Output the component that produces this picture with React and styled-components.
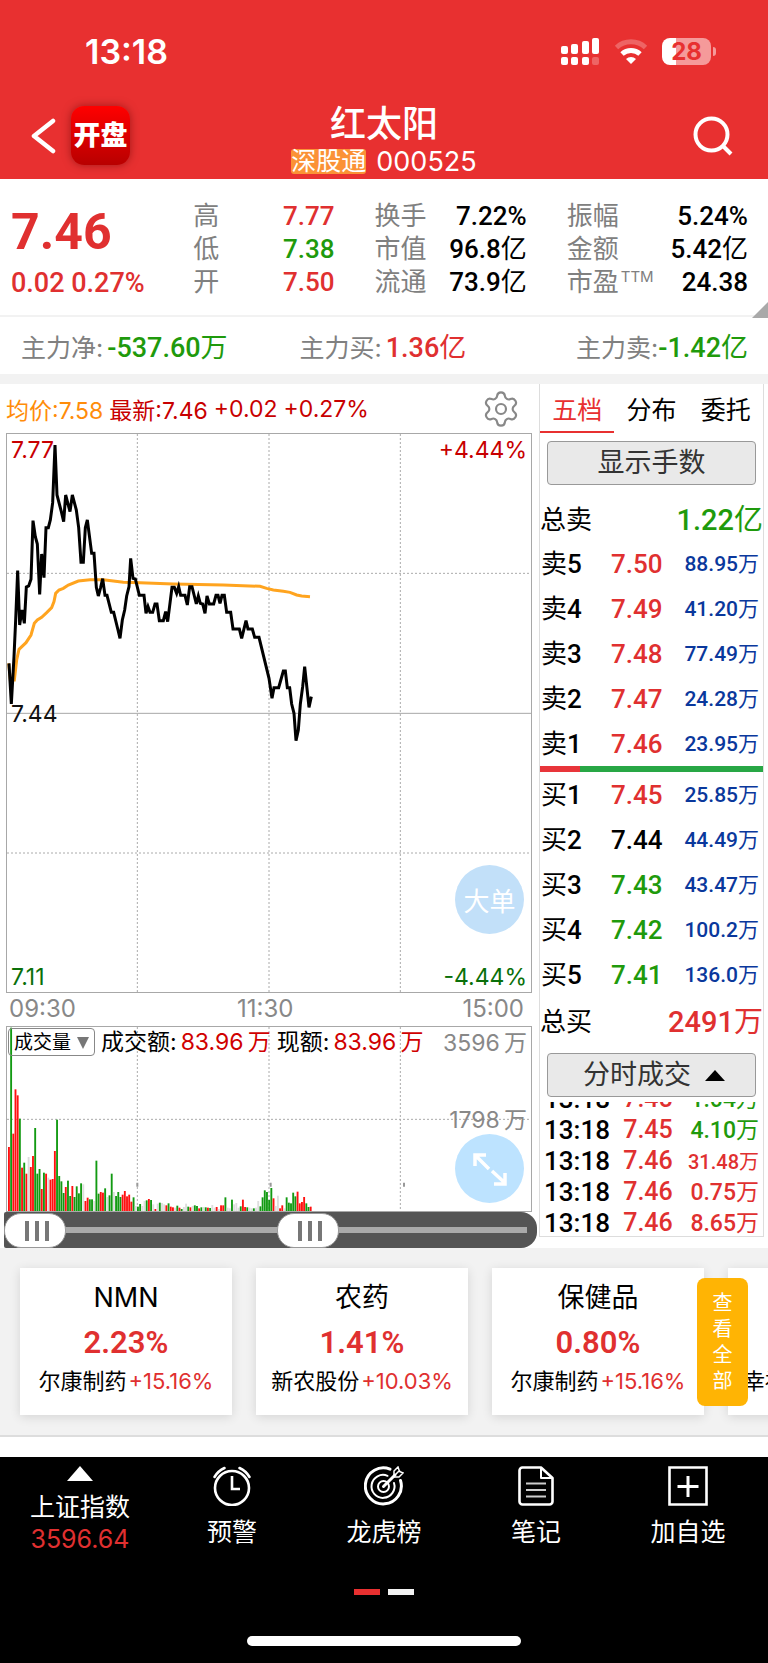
import {useState} from 'react';
import styled, {createGlobalStyle} from 'styled-components';
import {Settings} from 'lucide-react';

const RED = '#e03030';
const GREEN = '#1f9a0c';
const BLUE = '#0a389c';
const tones = {red: RED, green: GREEN, blue: BLUE, black: '#000'};

const GlobalStyle = createGlobalStyle`
    * { box-sizing:border-box; }
    body {
        margin:0;
        background-color:white;
        color:#000;
        font-family:Inter, "Noto Sans CJK SC", sans-serif;
    }
    button, select, input { font-family:inherit; color:inherit; margin:0; padding:0; }
    button { border:none; background:none; cursor:pointer; }
    a { color:inherit; text-decoration:none; }
    table { border-collapse:collapse; width:100%; }
    td, th { padding:0; font-weight:400; text-align:left; }
    dl, dd, p, h1 { margin:0; }
    svg { display:block; }
`;

const Page = styled.div`
    position:relative;
    overflow:hidden;
`;

/* numbers use a narrower, heavier face than the labels */
const Num = styled.span`
    font-family:Roboto, "Noto Sans CJK SC", sans-serif;
    font-weight:${p => p.$weight || 500};
    font-size:${p => p.$size || 26}px;
    color:${p => tones[p.$tone] || 'inherit'};
    white-space:nowrap;
`;

const Unit = styled.span`
    font-weight:400;
`;

/* ---------- header ---------- */

const Header = styled.header`
    background-color:#e83030;
    color:white;
`;
const StatusBar = styled.div`
    display:flex;
    justify-content:space-between;
    align-items:center;
    height:95px;
    padding:7px 57px 0 85px;
    font-size:34px;
    font-weight:600;
`;
const StatusIcons = styled.div`
    display:flex;
    align-items:center;
    gap:14px;
`;
const Battery = styled.div`
    position:relative;
    width:49px;
    height:27px;
    border-radius:8px;
    background:linear-gradient(90deg, white 28%, #f59a9a 28%);
    color:#e83030;
    font-size:24px;
    font-weight:700;
    line-height:27px;
    text-align:center;
    &::after {
        content:'';
        position:absolute;
        left:51px;
        top:9px;
        width:3px;
        height:9px;
        border-radius:0 3px 3px 0;
        background-color:#f59a9a;
    }
`;
const NavBar = styled.div`
    display:grid;
    grid-template-columns:1fr auto 1fr;
    align-items:center;
    height:84px;
    padding:0 30px 3px;
`;
const NavLeft = styled.div`
    display:flex;
    align-items:center;
    gap:15px;
`;
const AppLogo = styled.a`
    width:59px;
    height:59px;
    border-radius:13px;
    background:linear-gradient(#ff0000, #b80000);
    box-shadow:0 0 8px rgba(90, 0, 0, 0.5);
    font-size:27px;
    font-weight:900;
    line-height:59px;
    text-align:center;
    white-space:nowrap;
`;
const StockTitle = styled.div`
    padding-top:6px;
    text-align:center;
    h1 { font-size:36px; font-weight:500; line-height:42px; }
`;
const StockCode = styled.div`
    display:flex;
    align-items:center;
    justify-content:center;
    gap:10px;
    margin-top:4px;
    font-size:27px;
    line-height:25px;
`;
const Badge = styled.span`
    border-radius:3px;
    background-color:#fb9236;
    font-size:25px;
`;
const SearchButton = styled.button`
    justify-self:end;
    margin-right:5px;
`;

/* ---------- quote summary ---------- */

const Quote = styled.section`
    position:relative;
    display:grid;
    grid-template-columns:142fr 141fr 152fr 181fr;
    column-gap:40px;
    height:138px;
    padding:20px 20px 0 11px;
    border-bottom:2px solid #f2f2f2;
    &::after {
        content:'';
        position:absolute;
        right:0;
        bottom:-3px;
        border-left:16px solid transparent;
        border-bottom:16px solid #a9a9a9;
    }
`;
const LastPrice = styled.div`
    color:${RED};
    span { display:block; line-height:67px; }
    span + span { line-height:34px; }
`;
const StatList = styled.dl`
    color:#808080;
    font-size:26px;
    line-height:33px;
    div { display:flex; justify-content:space-between; height:33px; white-space:nowrap; }
    sup { font-size:15px; line-height:15px; vertical-align:9px; margin-left:2px; }
`;
const FlowRow = styled.section`
    display:grid;
    grid-template-columns:280fr 278fr 169fr;
    height:67px;
    padding:4px 20px 0 21px;
    border-bottom:10px solid #f2f2f2;
    color:#808080;
    font-size:25px;
    line-height:54px;
    white-space:nowrap;
    div { display:flex; gap:4px; }
    div:last-child { justify-content:flex-end; gap:0; }
`;

/* ---------- chart column ---------- */

const Board = styled.main`
    display:flex;
    padding-right:4px;
`;
const ChartColumn = styled.section`
    flex:1;
    min-width:0;
    padding:0 7px 0 6px;
`;
const ChartInfo = styled.div`
    display:flex;
    align-items:center;
    gap:6px;
    height:49px;
    padding-right:11px;
    color:#c80000;
    font-size:23px;
    white-space:nowrap;
    button { margin-left:auto; color:#888; }
`;
const Average = styled.span`
    color:#ff8c0a;
`;
const PlotBox = styled.div`
    position:relative;
    height:${p => p.$height}px;
    border:1px solid #a8a8a8;
`;
const Plot = styled.svg`
    width:100%;
    height:100%;
    * { vector-effect:non-scaling-stroke; }
`;
const PlotLabel = styled.span`
    position:absolute;
    ${p => p.$right ? 'right:4px;' : 'left:4px;'}
    top:${p => p.$top};
    color:${p => p.$color};
    font-size:23px;
    line-height:28px;
    white-space:nowrap;
`;
const TimeAxis = styled.div`
    display:flex;
    justify-content:space-between;
    height:33px;
    padding:0 8px 0 3px;
    color:#888;
    font-size:24px;
    line-height:31px;
    span:nth-child(2) { margin-right:8px; }
`;
const RoundButton = styled.button`
    position:absolute;
    right:7px;
    bottom:${p => p.$bottom}px;
    display:flex;
    align-items:center;
    justify-content:center;
    width:69px;
    height:69px;
    border-radius:50%;
    background-color:${p => p.$color};
    color:white;
    font-size:26px;
`;
const VolumeBar = styled.div`
    position:absolute;
    left:1px;
    top:1px;
    display:flex;
    align-items:center;
    gap:6px;
    height:28px;
    font-size:23px;
    line-height:24px;
    white-space:nowrap;
    b { margin-left:4px; color:#d00000; font-weight:400; }
`;
const SelectWrap = styled.label`
    position:relative;
    svg { position:absolute; right:6px; top:9px; pointer-events:none; }
`;
const IndicatorSelect = styled.select`
    display:block;
    appearance:none;
    width:87px;
    height:28px;
    padding-left:5px;
    border:1px solid #888;
    border-radius:4px;
    background-color:transparent;
    font-size:19px;
`;
const RangeSlider = styled.div`
    position:relative;
    height:36px;
    margin:0 -5px 0 -2px;
    border-radius:2px 16px 16px 2px;
    background:linear-gradient(#aaa, #aaa) 10px 15px / calc(100% - 20px) 6px no-repeat #555;
`;
const RangeInput = styled.input`
    position:absolute;
    inset:0;
    width:100%;
    height:36px;
    appearance:none;
    background:none;
    pointer-events:none;
    &::-webkit-slider-thumb {
        appearance:none;
        pointer-events:auto;
        width:62px;
        height:35px;
        border:1px solid #999;
        border-radius:17px;
        background:
            linear-gradient(#777, #777) 20px 7px / 4px 20px no-repeat,
            linear-gradient(#777, #777) 30px 7px / 4px 20px no-repeat,
            linear-gradient(#777, #777) 40px 7px / 4px 20px no-repeat,
            white;
    }
`;

/* ---------- order book ---------- */

const BookPanel = styled.aside`
    flex:0 0 225px;
    margin-bottom:11px;
    border:1px solid #ddd;
    border-top:none;
`;
const Tabs = styled.div`
    display:flex;
    height:49px;
`;
const Tab = styled.button`
    flex:1;
    border-bottom:2px solid ${p => p.$active ? '#e83030' : 'transparent'};
    color:${p => p.$active ? '#e83030' : '#000'};
    font-size:25px;
`;
const GreyButton = styled.button`
    display:flex;
    align-items:center;
    justify-content:center;
    gap:14px;
    width:calc(100% - 14px);
    height:44px;
    margin:${p => p.$margin};
    border:1px solid #999;
    border-radius:4px;
    background-color:#e9e9e9;
    color:#333;
    font-size:27px;
    line-height:36px;
    svg { margin-right:-5px; }
`;
const TotalRow = styled.div`
    display:flex;
    align-items:center;
    justify-content:space-between;
    height:56px;
    padding:${p => p.$padding};
    font-size:26px;
`;
const BookTable = styled.table`
    font-family:Roboto, "Noto Sans CJK SC", sans-serif;
    font-size:26px;
    th, td { height:45px; line-height:34px; }
    th { width:71px; padding-left:1px; white-space:nowrap; }
    td:last-child { padding-right:4px; font-size:21px; text-align:right; }
`;
const RatioBar = styled.div`
    height:6px;
    background:linear-gradient(90deg, #e8353a 18%, #28a745 18%);
`;
const TradeClip = styled.div`
    display:flex;
    flex-direction:column;
    justify-content:flex-end;
    height:134px;
    overflow:hidden;
`;
const TradeTable = styled.table`
    font-family:Roboto, "Noto Sans CJK SC", sans-serif;
    font-size:25px;
    td { height:31px; padding-top:5px; line-height:22px; }
    td:first-child { padding-left:4px; }
    td:nth-child(2) { padding-left:5px; }
    td:last-child { padding-right:4px; text-align:right; }
`;

/* ---------- concepts ---------- */

const Concepts = styled.section`
    position:relative;
    margin-bottom:20px;
    padding:20px;
    border-bottom:2px solid #ddd;
    background-color:#f2f2f2;
`;
const CardRow = styled.div`
    display:flex;
    gap:24px;
`;
const Card = styled.a`
    flex:0 0 212px;
    height:147px;
    padding-top:12px;
    background-color:white;
    box-shadow:0 2px 10px rgba(0, 0, 0, 0.12);
    text-align:center;
    white-space:nowrap;
`;
const CardName = styled.p`
    font-size:27px;
    line-height:36px;
`;
const CardChange = styled.p`
    height:54px;
    line-height:54px;
`;
const CardLeader = styled.p`
    font-size:22px;
    line-height:22px;
    span { margin-left:2px; color:${RED}; }
`;
const AllButton = styled.button`
    position:absolute;
    right:20px;
    top:30px;
    width:51px;
    height:128px;
    padding:0 15px;
    border-radius:8px;
    background-color:#ffb404;
    color:white;
    font-size:20px;
    line-height:26px;
`;

/* ---------- bottom bar ---------- */

const Footer = styled.footer`
    padding-bottom:17px;
    background-color:#000;
    color:white;
`;
const FooterNav = styled.nav`
    display:grid;
    grid-template-columns:repeat(5, 1fr);
    height:99px;
    padding:9px 4px 0;
`;
const FooterItem = styled.button`
    display:flex;
    flex-direction:column;
    align-items:center;
    gap:10px;
    font-size:25px;
    line-height:32px;
    white-space:nowrap;
    em { display:block; color:${RED}; font-style:normal; }
`;
const Pager = styled.div`
    display:flex;
    justify-content:center;
    gap:8px;
    padding-top:33px;
`;
const PagerDot = styled.span`
    width:26px;
    height:6px;
    background-color:${p => p.$active ? '#e83030' : '#f2f2f2'};
`;
const HomeBar = styled.div`
    width:274px;
    height:10px;
    margin:41px auto 0;
    border-radius:5px;
    background-color:white;
`;

const stats = [
    [['高', '7.77', 'red'], ['低', '7.38', 'green'], ['开', '7.50', 'red']],
    [['换手', '7.22%'], ['市值', '96.8', 'black', '亿'], ['流通', '73.9', 'black', '亿']],
    [['振幅', '5.24%'], ['金额', '5.42', 'black', '亿'], ['市盈', '24.38', 'black', '', 'TTM']],
];

const sells = [
    ['卖', '5', '7.50', 'red', '88.95'],
    ['卖', '4', '7.49', 'red', '41.20'],
    ['卖', '3', '7.48', 'red', '77.49'],
    ['卖', '2', '7.47', 'red', '24.28'],
    ['卖', '1', '7.46', 'red', '23.95'],
];
const buys = [
    ['买', '1', '7.45', 'red', '25.85'],
    ['买', '2', '7.44', 'black', '44.49'],
    ['买', '3', '7.43', 'green', '43.47'],
    ['买', '4', '7.42', 'green', '100.2'],
    ['买', '5', '7.41', 'green', '136.0'],
];
const trades = [
    ['13:18', '7.45', '1.04', 'green'],
    ['13:18', '7.45', '4.10', 'green'],
    ['13:18', '7.46', '31.48', 'red'],
    ['13:18', '7.46', '0.75', 'red'],
    ['13:18', '7.46', '8.65', 'red'],
];
const concepts = [
    ['NMN', '2.23%', '尔康制药', '+15.16%'],
    ['农药', '1.41%', '新农股份', '+10.03%'],
    ['保健品', '0.80%', '尔康制药', '+15.16%'],
    ['福建', '0.62%', '幸福蓝海', '+12.08%'],
];

const priceLine = '27,850 34,972 42,830 47,720 53,572 59,735 66,690 73,730 79,621 86,618 93,598 99,422 106,470 112,492 119,643 125,522 132,593 138,443 145,443 151,420 158,368 165,195 171,345 184,395 191,425 197,345 210,395 217,345 229,390 236,443 243,547 250,547 256,443 262,420 275,520 282,520 289,622 295,648 302,622 308,596 315,646 321,646 334,697 341,697 354,750 360,775 367,720 374,690 380,648 387,620 392,535 399,595 406,597 418,646 432,646 438,700 444,680 450,697 458,697 465,672 471,672 478,722 490,722 497,695 503,725 516,622 523,622 530,640 536,620 542,646 555,646 562,675 569,620 576,620 589,672 595,648 601,670 608,672 615,700 621,648 628,672 641,672 648,646 654,646 660,670 666,646 673,646 680,697 692,697 699,747 718,747 725,775 738,722 744,747 757,747 764,772 777,772 807,895 816,955 822,923 836,923 850,873 856,873 862,923 869,923 875,972 882,1000 888,1082 895,1050 901,972 908,920 914,860 927,982 934,950';
const averageLine = '26,850 31,900 43,900 50,840 57,808 78,788 93,765 103,730 112,720 125,712 140,698 155,683 162,665 167,640 177,630 190,625 205,615 235,603 270,599 310,599 340,603 370,607 420,608 520,612 670,615 780,619 800,625 820,630 850,634 870,637 890,645 905,648 930,650';

// one entry per minute: r = up, g = down, n = unchanged
const volumes = 'r192 g550 r232 r365 r347 g277 r130 g145 r112 n162 r132 r165 g249 g112 g126 r66 g115 r112 n100 r94 r96 r180 g274 g105 g89 g54 r72 g91 g45 r75 g42 g74 g53 g83 n80 r30 r40 g35 g35 n30 g151 g52 r57 r55 g68 n42 g47 g112 n57 g45 g57 g42 r49 r60 r44 r49 r28 g41 n15 g13 g21 n15 n30 g32 r36 g33 n20 r6 n22 g25 n24 n20 r17 g23 r13 r11 n10 g16 r10 g6 n12 n22 g13 r11 n15 g17 g15 r8 g11 n12 g11 r10 g9 n18 n10 r12 n6 r17 r17 g41 n10 n8 g34 n20 n24 n10 g14 r34 r12 g11 n10 n8 g8 n10 n30 g14 g41 g62 g57 g33 g69 r38 n15 n46 r8 r17 n8 g41 g25 g23 g55 g44 r58 r23 r27 r42 g23 g12 r13'
    .split(' ')
    .map(v => ({kind: v[0], size: Number(v.slice(1))}));
const volumeColors = {r: '#ff1010', g: '#129a12', n: '#ddd'};

function SignalIcon() {
    const bars = [[0, 8, 8], [10, 6, 10], [21, 3, 13], [31, 0, 16]];
    return (
        <svg width="39" height="27" viewBox="0 0 39 27" fill="white" aria-hidden="true">
            {bars.map(([x, y, h], i) => (
                <g key={x}>
                    <rect x={x} y={y} width="7" height={h} rx="2" />
                    <rect x={x} y="19" width="7" height="8" rx="2" opacity={i === 3 ? 0.25 : 1} />
                </g>
            ))}
        </svg>
    );
}

function WifiIcon() {
    return (
        <svg width="34" height="27" viewBox="0 0 34 27" fill="none" stroke="white" strokeWidth="5" aria-hidden="true">
            <path d="M2.500 9.500a21.500 21.500 0 0 1 29 0" opacity="0.25" />
            <path d="M8 16a13.500 13.500 0 0 1 18 0" />
            <path d="M17 26l-5-5a7.500 7.500 0 0 1 10 0z" fill="white" stroke="none" />
        </svg>
    );
}

function ClockIcon() {
    return (
        <svg width="40" height="40" viewBox="0 0 40 40" fill="none" stroke="white" strokeWidth="2.6" strokeLinecap="round" aria-hidden="true">
            <circle cx="20" cy="22" r="17" />
            <path d="M20 10v13h8" strokeLinecap="butt" />
            <path d="M2.500 11Q6 5 12.500 2M37.500 11Q34 5 27.500 2" />
        </svg>
    );
}

function TargetIcon() {
    return (
        <svg width="40" height="40" viewBox="0 0 40 40" fill="none" stroke="white" strokeLinecap="round" aria-hidden="true">
            <path d="M26 3.200A18 18 0 1 0 36.500 14.500" strokeWidth="3" />
            <path d="M23.500 9.800A11.500 11.500 0 1 0 30 17" strokeWidth="2" />
            <circle cx="19.500" cy="20.500" r="5.500" strokeWidth="2" />
            <path d="M19.500 20.500L31 9" strokeWidth="3" />
            <path d="M30 10V5l4-4 1.500 4.500L39 7l-4 4h-5zM31 9l4.500-4.500" strokeWidth="1.500" />
        </svg>
    );
}

function NoteIcon() {
    return (
        <svg width="40" height="40" viewBox="0 0 40 40" fill="none" stroke="white" strokeWidth="2.6" strokeLinejoin="round" aria-hidden="true">
            <path d="M6 1.500h19L36.500 12v23.500a3 3 0 0 1-3 3H6.500a3 3 0 0 1-3-3v-31a3 3 0 0 1 3-3z" />
            <path d="M25 1.500V12h11" strokeWidth="2" />
            <path d="M10 17.500h20M10 24h20M10 30.500h20" strokeWidth="2" opacity="0.8" />
        </svg>
    );
}

function AddIcon() {
    return (
        <svg width="40" height="40" viewBox="0 0 40 40" fill="none" stroke="white" strokeWidth="2.6" aria-hidden="true">
            <path d="M1.500 1.500h37v37h-37z" />
            <path d="M20 10v21M9.500 20.500h21" strokeWidth="3" />
        </svg>
    );
}

function BookRows({rows}) {
    return (
        <BookTable>
            <tbody>
                {rows.map(([side, level, price, tone, amount]) => (
                    <tr key={level}>
                        <th scope="row">{side}<Num>{level}</Num></th>
                        <td><Num $tone={tone}>{price}</Num></td>
                        <td><Num $size={21} $tone="blue">{amount}<Unit>万</Unit></Num></td>
                    </tr>
                ))}
            </tbody>
        </BookTable>
    );
}

function PriceChart() {
    return (
        <PlotBox $height={560}>
            <Plot viewBox="21 162 1572 1674" preserveAspectRatio="none" role="img" aria-label="分时走势">
                <g stroke="#aaa" strokeWidth="1" strokeDasharray="2 2">
                    <path d="M412 162V1836M807 162V1836M1201 162V1836" />
                    <path d="M21 580H1593M21 1419H1593" />
                </g>
                <path d="M21 1000H1593" stroke="#a8a8a8" />
                <polyline points={averageLine} fill="none" stroke="#ffa41f" strokeWidth="3" />
                <polyline points={priceLine} fill="none" stroke="#000" strokeWidth="3" />
            </Plot>
            <PlotLabel $top="2px" $color="#c80000">7.77</PlotLabel>
            <PlotLabel $top="2px" $color="#c80000" $right>+4.44%</PlotLabel>
            <PlotLabel $top="calc(50% - 13px)" $color="#111">7.44</PlotLabel>
            <PlotLabel $top="calc(100% - 29px)" $color="#0a700a">7.11</PlotLabel>
            <PlotLabel $top="calc(100% - 29px)" $color="#0a700a" $right>-4.44%</PlotLabel>
            <RoundButton $bottom={58} $color="#c2e0f9">大单</RoundButton>
        </PlotBox>
    );
}

function VolumeChart() {
    return (
        <PlotBox $height={186}>
            <Plot viewBox="21 81 1572 552" preserveAspectRatio="none" role="img" aria-label="成交量">
                <g stroke="#aaa" strokeWidth="1" strokeDasharray="2 2">
                    <path d="M412 81V633M807 81V633M1201 81V633" />
                    <path d="M21 358H1593" />
                </g>
                <path d="M412 548v12M812 548v12M1212 548v12" stroke="#999" strokeWidth="2" />
                {volumes.map((v, i) => (
                    <rect key={i} x={24 + i * 6.56} y={633 - v.size} width="5.600" height={v.size} fill={volumeColors[v.kind]} />
                ))}
            </Plot>
            <VolumeBar>
                <SelectWrap>
                    <IndicatorSelect aria-label="指标">
                        <option>成交量</option>
                    </IndicatorSelect>
                    <svg width="12" height="12" viewBox="0 0 12 12" fill="#777"><path d="M0 0h12L6 12z" /></svg>
                </SelectWrap>
                <span>成交额:<b>83.96&thinsp;万</b></span>
                <span>现额:<b>83.96&thinsp;万</b></span>
            </VolumeBar>
            <PlotLabel $top="2px" $color="#888" $right>3596&thinsp;万</PlotLabel>
            <PlotLabel $top="79px" $color="#888" $right>1798&thinsp;万</PlotLabel>
            <RoundButton $bottom={8} $color="#bde3ff" aria-label="全屏">
                <svg width="34" height="34" viewBox="0 0 34 34" fill="none" stroke="white" strokeWidth="3.500" aria-hidden="true">
                    <path d="M2 14V3h11M3 4l13 13M19 19l13 12M32 21v11H21" />
                </svg>
            </RoundButton>
        </PlotBox>
    );
}

function App() {
    const [tab, setTab] = useState('五档');
    const [start, setStart] = useState(0);
    const [end, setEnd] = useState(58);
    return (
        <Page>
            <GlobalStyle />
            <Header>
                <StatusBar>
                    <span>13:18</span>
                    <StatusIcons>
                        <SignalIcon />
                        <WifiIcon />
                        <Battery>28</Battery>
                    </StatusIcons>
                </StatusBar>
                <NavBar>
                    <NavLeft>
                        <button aria-label="返回">
                            <svg width="26" height="36" viewBox="0 0 26 36" fill="none" stroke="white" strokeWidth="4.500" strokeLinecap="round" strokeLinejoin="round">
                                <path d="M23 3L4 18l19 15" />
                            </svg>
                        </button>
                        <AppLogo href="#">开盘</AppLogo>
                    </NavLeft>
                    <StockTitle>
                        <h1>红太阳</h1>
                        <StockCode><Badge>深股通</Badge>000525</StockCode>
                    </StockTitle>
                    <SearchButton aria-label="搜索">
                        <svg width="40" height="40" viewBox="0 0 40 40" fill="none" stroke="white" strokeWidth="4">
                            <circle cx="18.500" cy="18.500" r="16" />
                            <path d="M30 30l8 8" />
                        </svg>
                    </SearchButton>
                </NavBar>
            </Header>

            <Quote>
                <LastPrice>
                    <Num $size={50} $weight={700}>7.46</Num>
                    <Num $size={27}>0.02 0.27%</Num>
                </LastPrice>
                {stats.map((group, i) => (
                    <StatList key={i}>
                        {group.map(([label, value, tone, unit, note]) => (
                            <div key={label}>
                                <dt>{label}{note && <sup>{note}</sup>}</dt>
                                <dd><Num $tone={tone || 'black'}>{value}<Unit>{unit}</Unit></Num></dd>
                            </div>
                        ))}
                    </StatList>
                ))}
            </Quote>
            <FlowRow>
                <div>主力净:<Num $size={27} $tone="green">-537.60<Unit>万</Unit></Num></div>
                <div>主力买:<Num $size={27} $tone="red">1.36<Unit>亿</Unit></Num></div>
                <div>主力卖:<Num $size={27} $tone="green">-1.42<Unit>亿</Unit></Num></div>
            </FlowRow>

            <Board>
                <ChartColumn>
                    <ChartInfo>
                        <Average>均价:7.58</Average>
                        <span>最新:7.46</span>
                        <span>+0.02</span>
                        <span>+0.27%</span>
                        <button aria-label="设置"><Settings size={40} strokeWidth={1.3} /></button>
                    </ChartInfo>
                    <PriceChart />
                    <TimeAxis><span>09:30</span><span>11:30</span><span>15:00</span></TimeAxis>
                    <VolumeChart />
                    <RangeSlider>
                        <RangeInput type="range" aria-label="起点" value={start} onChange={e => setStart(Number(e.target.value))} />
                        <RangeInput type="range" aria-label="终点" value={end} onChange={e => setEnd(Number(e.target.value))} />
                    </RangeSlider>
                </ChartColumn>

                <BookPanel>
                    <Tabs>
                        {['五档', '分布', '委托'].map(name => (
                            <Tab key={name} $active={tab === name} onClick={() => setTab(name)}>{name}</Tab>
                        ))}
                    </Tabs>
                    <GreyButton $margin="8px 7px 0">显示手数</GreyButton>
                    <TotalRow $padding="8px 0 0">总卖<Num $size={29} $tone="green">1.22<Unit>亿</Unit></Num></TotalRow>
                    <BookRows rows={sells} />
                    <RatioBar />
                    <BookRows rows={buys} />
                    <TotalRow $padding="0 0 12px">总买<Num $size={29} $tone="red">2491<Unit>万</Unit></Num></TotalRow>
                    <GreyButton $margin="0 7px 5px">
                        分时成交
                        <svg width="20" height="11" viewBox="0 0 20 11"><path d="M10 0l10 11H0z" /></svg>
                    </GreyButton>
                    <TradeClip>
                        <TradeTable>
                            <tbody>
                                {trades.map(([time, price, amount, tone], i) => (
                                    <tr key={i}>
                                        <td><Num>{time}</Num></td>
                                        <td><Num $size={25} $tone="red">{price}</Num></td>
                                        <td><Num $size={amount.length > 4 ? 20 : 23} $tone={tone}>{amount}<Unit>万</Unit></Num></td>
                                    </tr>
                                ))}
                            </tbody>
                        </TradeTable>
                    </TradeClip>
                </BookPanel>
            </Board>

            <Concepts>
                <CardRow>
                    {concepts.map(([name, change, leader, gain]) => (
                        <Card key={name} href="#">
                            <CardName>{name}</CardName>
                            <CardChange><Num $size={31} $weight={600} $tone="red">{change}</Num></CardChange>
                            <CardLeader>{leader}<span>{gain}</span></CardLeader>
                        </Card>
                    ))}
                </CardRow>
                <AllButton>查看全部</AllButton>
            </Concepts>

            <Footer>
                <FooterNav>
                    <FooterItem>
                        <svg width="26" height="15" viewBox="0 0 26 15" fill="white" aria-hidden="true"><path d="M13 0l13 15H0z" /></svg>
                        <span>上证指数<em>3596.64</em></span>
                    </FooterItem>
                    <FooterItem><ClockIcon />预警</FooterItem>
                    <FooterItem><TargetIcon />龙虎榜</FooterItem>
                    <FooterItem><NoteIcon />笔记</FooterItem>
                    <FooterItem><AddIcon />加自选</FooterItem>
                </FooterNav>
                <Pager><PagerDot $active /><PagerDot /></Pager>
                <HomeBar />
            </Footer>
        </Page>
    );
}

export default App;
